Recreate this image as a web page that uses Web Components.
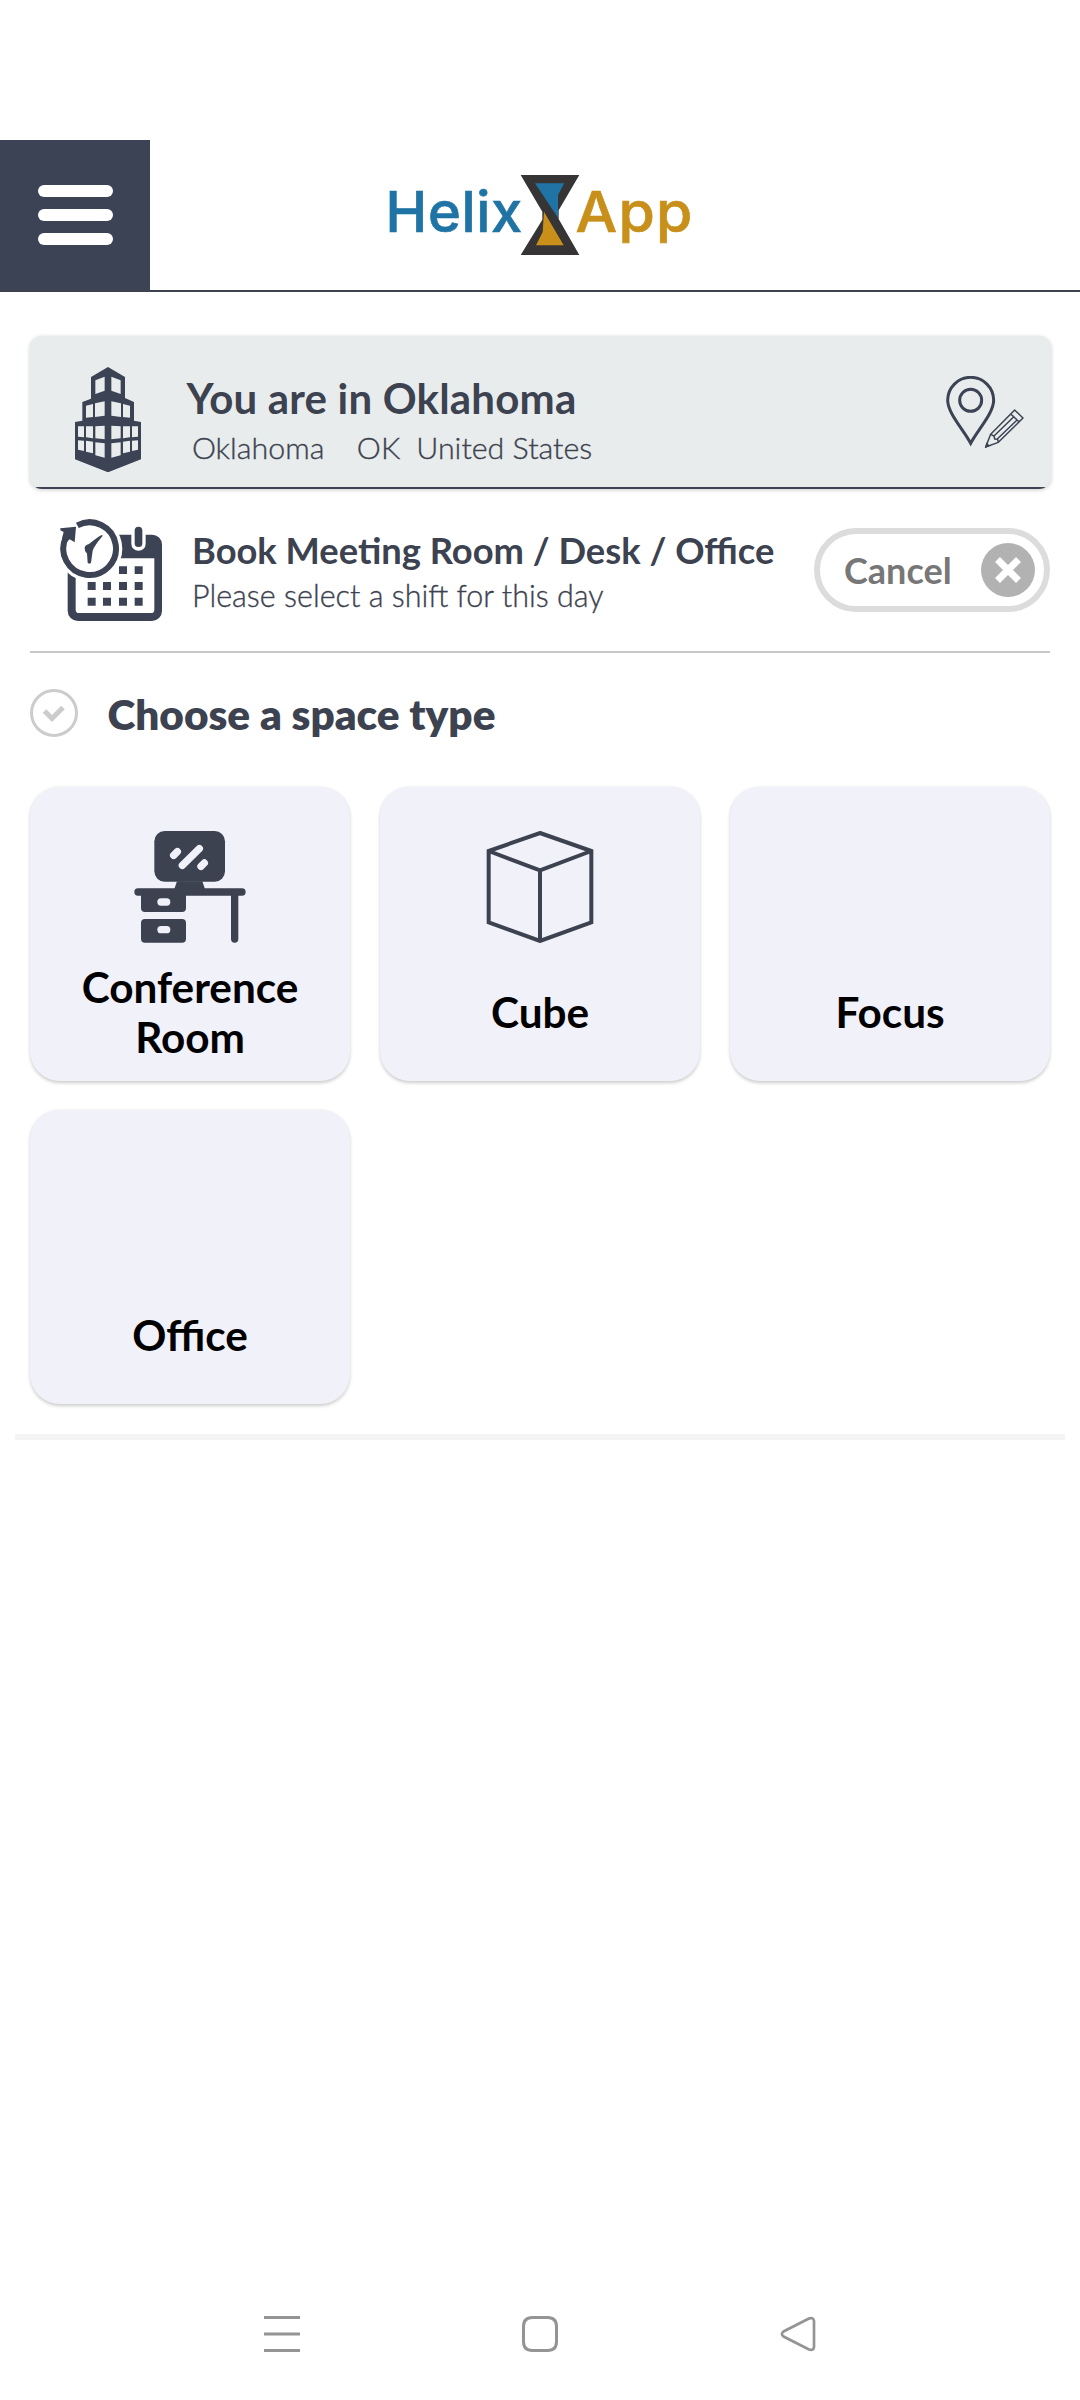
<!DOCTYPE html>
<html lang="en">
<head>
<meta charset="utf-8">
<title>Helix App</title>
<style>
  body { margin: 0; background: #fff; color: #3c424f; font-family: Lato, "Noto Sans", sans-serif; }
</style>
</head>
<body>
<helix-screen>
  <app-header slot="header"></app-header>
  <location-card>
    <building-icon slot="icon"></building-icon>
    <span slot="title">You are in Oklahoma</span>
    <span slot="city">Oklahoma</span>
    <span slot="state">OK</span>
    <span slot="country">United States</span>
  </location-card>
  <booking-row>
    <calendar-icon slot="icon"></calendar-icon>
    <span slot="title">Book Meeting Room / Desk / Office</span>
    <span slot="hint">Please select a shift for this day</span>
    <cancel-button slot="action">Cancel</cancel-button>
  </booking-row>
  <section-title>Choose a space type</section-title>
  <tile-grid>
    <space-tile><desk-icon slot="icon"></desk-icon>Conference Room</space-tile>
    <space-tile><cube-icon slot="icon"></cube-icon>Cube</space-tile>
    <space-tile>Focus</space-tile>
    <space-tile>Office</space-tile>
  </tile-grid>
  <system-nav slot="nav"></system-nav>
</helix-screen>

<script>
const define = (name, html) => {
  const template = document.createElement('template');
  template.innerHTML = html;
  customElements.define(name, class extends HTMLElement {
    constructor() {
      super();
      this.attachShadow({ mode: 'open' }).appendChild(template.content.cloneNode(true));
    }
  });
};

define('helix-screen', `
<style>
  :host { display: flex; flex-direction: column; box-sizing: border-box; width: 1080px; height: 2400px; padding-top: 140px; background: #fff; }
  main { flex: 1; padding-top: 44px; }
  hr { height: 6px; margin: 30px 15px 0; border: 0; background: #f4f4f4; }
</style>
<slot name="header"></slot>
<main><slot></slot><hr></main>
<slot name="nav"></slot>`);

define('app-header', `
<style>
  :host { display: grid; grid-template-columns: 150px 1fr 150px; height: 150px; border-bottom: 2px solid #3c424f; }
  button { display: flex; flex-direction: column; align-items: center; justify-content: center; gap: 12px; border: 0; padding: 0; background: #3b4354; }
  i { width: 75px; height: 12px; border-radius: 6px; background: #fff; }
  helix-logo { place-self: center; }
</style>
<button aria-label="Menu"><i></i><i></i><i></i></button>
<helix-logo></helix-logo>`);

define('helix-logo', `
<style>
  :host { display: block; width: 300px; height: 80px; }
  svg { display: block; overflow: visible; }
  text { font: 500 56px Inter, sans-serif; stroke-width: .7px; }
</style>
<svg width="300" height="80" viewBox="0 0 300 80">
  <text x="-4.5" y="57" fill="#1f74a5" stroke="#1f74a5" letter-spacing=".7">Helix</text>
  <g transform="scale(.33333) translate(-60 -75)">
    <path fill="#373435" d="M452 75H628L566 181V207L628 315H452L517 209V185Z"/>
    <path fill="#1f74a5" d="M495 100H583L564 135V203Z"/>
    <path fill="#c8901a" d="M522 185L581 286H498L518 246Z"/>
  </g>
  <text transform="translate(185.500 57) scale(1.05 1)" fill="#c8901a" stroke="#c8901a" letter-spacing="1.2">App</text>
</svg>`);

define('location-card', `
<style>
  :host { display: flex; box-sizing: border-box; width: 1021.5px; height: 153px; margin-left: 29.5px; padding: 30.7px 27px 0 45.5px; background: linear-gradient(#3b4354, #3b4354) bottom / 100% 2px no-repeat #e8ecec; border-radius: 12px; box-shadow: 0 1px 4px rgba(0,0,0,.2); overflow: hidden; }
  .text { flex: 1; margin-left: 45.5px; padding-top: 6px; }
  h1 { margin: 0; font-size: 42px; line-height: 50px; font-weight: 700; letter-spacing: .2px; }
  p { display: flex; gap: 16px; margin: 6.3px 0 0 5.4px; font-size: 30.4px; line-height: 36px; font-weight: 300; -webkit-text-stroke: .35px currentColor; }
  .city { margin-right: 16.5px; }
  pin-icon { margin-top: 9.3px; }
</style>
<slot name="icon"></slot>
<div class="text">
  <h1><slot name="title"></slot></h1>
  <p><span class="city"><slot name="city"></slot></span><slot name="state"></slot><slot name="country"></slot></p>
</div>
<pin-icon></pin-icon>`);

define('building-icon', `
<style>:host { display: block; } svg { display: block; }</style>
<svg width="66" height="105.3" viewBox="165 125 198 316">
  <path fill="#3b4354" d="M264 125L315 155V218L342 230V286L363 290V402L264 441L165 402V290L187 286V230L213 220V155Z"/>
  <defs><path id="w" d="M226 165L254 154V196L226 206ZM198 241L219 236V275L198 277ZM225 234L254 228V271L225 275ZM174 303H192V336L174 334ZM198 303H219V339L198 336ZM226 303L254 301V342L226 339ZM174 345L192 346V377L174 373ZM198 346L219 349V384L198 379ZM226 351L254 354V397L226 390Z"/></defs>
  <use href="#w" fill="#e8ecec"/>
  <use href="#w" fill="#e8ecec" transform="translate(528) scale(-1 1)"/>
</svg>`);

define('pin-icon', `
<style>:host { display: block; } svg { display: block; }</style>
<svg width="78" height="72" viewBox="498 153 234 216" fill="none" stroke="#3b4354">
  <path stroke-width="9" d="M572 355C552 316 503 265 503 226A69 69 0 0 1 641 226C641 265 592 316 572 355Z"/>
  <circle cx="572" cy="226" r="33" stroke-width="9"/>
  <path stroke-width="4.5" stroke-linejoin="round" d="M617 366L632 328L704 255L729 279L655 352ZM632 328L642 333L644 342L653 343L655 352M692 267L718 291M642 333L703 274M651 343L712 284"/>
  <path fill="#3b4354" stroke="none" d="M614 369L620 352L630 363Z"/>
</svg>`);

define('booking-row', `
<style>
  :host { display: flex; box-sizing: border-box; width: 1020px; height: 164px; margin-left: 30px; padding: 30px 0 0 30px; border-bottom: 2px solid #c8c8c8; }
  .text { flex: 1; margin-left: 30px; padding-top: 8.7px; white-space: nowrap; }
  h2 { margin: 0; font-size: 36.3px; line-height: 44px; font-weight: 700; }
  p { margin: 5.5px 0 0; font-size: 30.5px; line-height: 36px; font-weight: 300; -webkit-text-stroke: .35px currentColor; }
  ::slotted(cancel-button) { margin-top: 9px; }
</style>
<slot name="icon"></slot>
<div class="text"><h2><slot name="title"></slot></h2><p><slot name="hint"></slot></p></div>
<slot name="action"></slot>`);

define('calendar-icon', `
<style>:host { display: block; } svg { display: block; }</style>
<svg width="102" height="102" viewBox="120 87 306 306">
  <path fill="#3b4354" fill-rule="evenodd" d="M173 134H396A30 30 0 0 1 426 164V363A30 30 0 0 1 396 393H173A30 30 0 0 1 143 363V164A30 30 0 0 1 173 134ZM167 205V359A10 10 0 0 0 177 369H393A10 10 0 0 0 403 359V205Z"/>
  <path fill="#fff" d="M334 130H377V161A21.500 21.500 0 0 1 334 161Z"/>
  <rect x="344" y="110" width="23" height="61" rx="11.500" fill="#3b4354"/>
  <path fill="#3b4354" d="M297 229h24v23h-24zM344 229h24v23h-24zM203 276h24v24h-24zM249 276h24v24h-24zM297 276h24v24h-24zM344 276h24v24h-24zM203 323h24v24h-24zM249 323h24v24h-24zM297 323h24v24h-24zM344 323h24v24h-24z"/>
  <circle cx="209" cy="176" r="98" fill="#fff"/>
  <path fill="none" stroke="#3b4354" stroke-width="18" d="M172 106A79 79 0 1 1 138 141"/>
  <path fill="#3b4354" d="M121 115L168 110L164 157L149 148L137 160L126 145L131 126L121 121Z"/>
  <path fill="#3b4354" d="M247 135Q243 133 207 162Q193 166 194 176Q195 186 201 190L203 218Q208 223 213 218L218 182Q224 166 247 139Z"/>
</svg>`);

define('cancel-button', `
<style>
  :host { display: flex; align-items: center; justify-content: space-between; box-sizing: border-box; width: 236px; height: 84px; padding: 0 9px 0 24px; border: 6px solid #dcdcdc; border-radius: 42px; color: #777; font-size: 36px; line-height: 44px; font-weight: 700; }
</style>
<span><slot></slot></span>
<svg width="54" height="54" viewBox="0 0 54 54"><circle cx="27" cy="27" r="27" fill="#b2b2b2"/><path d="M16.500 16.500L37.500 37.500M37.500 16.500L16.500 37.500" stroke="#fff" stroke-width="7"/></svg>`);

define('section-title', `
<style>
  :host { display: flex; align-items: center; gap: 29.500px; height: 50px; padding: 35px 0 49.3px 30px; }
  h2 { margin: 0; padding-top: 2px; font-size: 42.3px; line-height: 50px; font-weight: 800; }
</style>
<svg width="48" height="48" viewBox="0 0 48 48" fill="none" stroke="#ccc"><circle cx="24" cy="24" r="22.500" stroke-width="3"/><path d="M14.500 22L22 29.500L33 18.500" stroke-width="5"/></svg>
<h2><slot></slot></h2>`);

define('tile-grid', `
<style>:host { display: grid; grid-template-columns: repeat(3, 320.500px); gap: 29.300px 29.500px; padding-left: 29.800px; }</style>
<slot></slot>`);

define('space-tile', `
<style>
  :host { display: flex; flex-direction: column; align-items: center; box-sizing: border-box; height: 293.700px; padding: 43.700px 30px 0; border-radius: 30px; background: #f1f1fa; box-shadow: 0 1.5px 3.5px rgba(0,0,0,.2); color: #000; }
  .icon { height: 112px; }
  .label { display: flex; align-items: center; height: 100px; margin-top: 19px; text-align: center; font-size: 42.3px; line-height: 50px; font-weight: 700; }
</style>
<div class="icon"><slot name="icon"></slot></div>
<div class="label"><span><slot></slot></span></div>`);

define('desk-icon', `
<style>:host { display: block; } svg { display: block; }</style>
<svg width="112" height="112" viewBox="342 183 336 336" fill="#3c424f">
  <rect x="403" y="183" width="212" height="152" rx="31"/>
  <path d="M471 334H547L555 357H463Z"/>
  <rect x="343" y="355" width="334" height="22" rx="11"/>
  <path d="M363 366H498V414A12 12 0 0 1 486 426H375A12 12 0 0 1 363 414Z"/>
  <rect x="363" y="447" width="135" height="71" rx="12"/>
  <path d="M633 366H655V507A11 11 0 0 1 633 507Z"/>
  <g fill="#f1f1fa"><rect x="412" y="385" width="39" height="22" rx="11"/><rect x="412" y="468" width="39" height="22" rx="11"/></g>
  <path stroke="#f1f1fa" stroke-width="22" stroke-linecap="round" d="M461 256L472 245M487 286L538 236M543 289L553 279"/>
</svg>`);

define('cube-icon', `
<style>:host { display: block; } svg { display: block; }</style>
<svg width="112" height="112" viewBox="342 183 336 336" fill="none" stroke="#3c424f" stroke-width="12">
  <path d="M510 189L664 243V457L510 513L356 457V243ZM356 243L510 301L664 243M510 301V513"/>
</svg>`);

define('system-nav', `
<style>
  :host { display: flex; align-items: center; justify-content: space-between; height: 132px; padding: 0 264px 0 264px; }
</style>
<svg width="36" height="36" viewBox="0 0 36 36" stroke="#949494" stroke-width="3"><path d="M0 1.500H36M0 18H36M0 34.500H36"/></svg>
<svg width="36" height="36" viewBox="0 0 36 36" fill="none" stroke="#949494" stroke-width="3"><path d="M10.500 1.500H25.500Q34.500 1.500 34.500 10.500V25.500Q34.500 34.500 25.500 34.500H10.500Q1.500 34.500 1.500 25.500V10.500Q1.500 1.500 10.500 1.500Z"/></svg>
<svg width="36" height="36" viewBox="0 0 36 36" fill="none" stroke="#949494" stroke-width="2.700"><path d="M29 2.500L3.500 15.500Q.300 18 3.500 20.500L29 33.500Q33.500 35 34 31V5Q33.500 1 29 2.500Z"/></svg>`);
</script>
</body>
</html>
